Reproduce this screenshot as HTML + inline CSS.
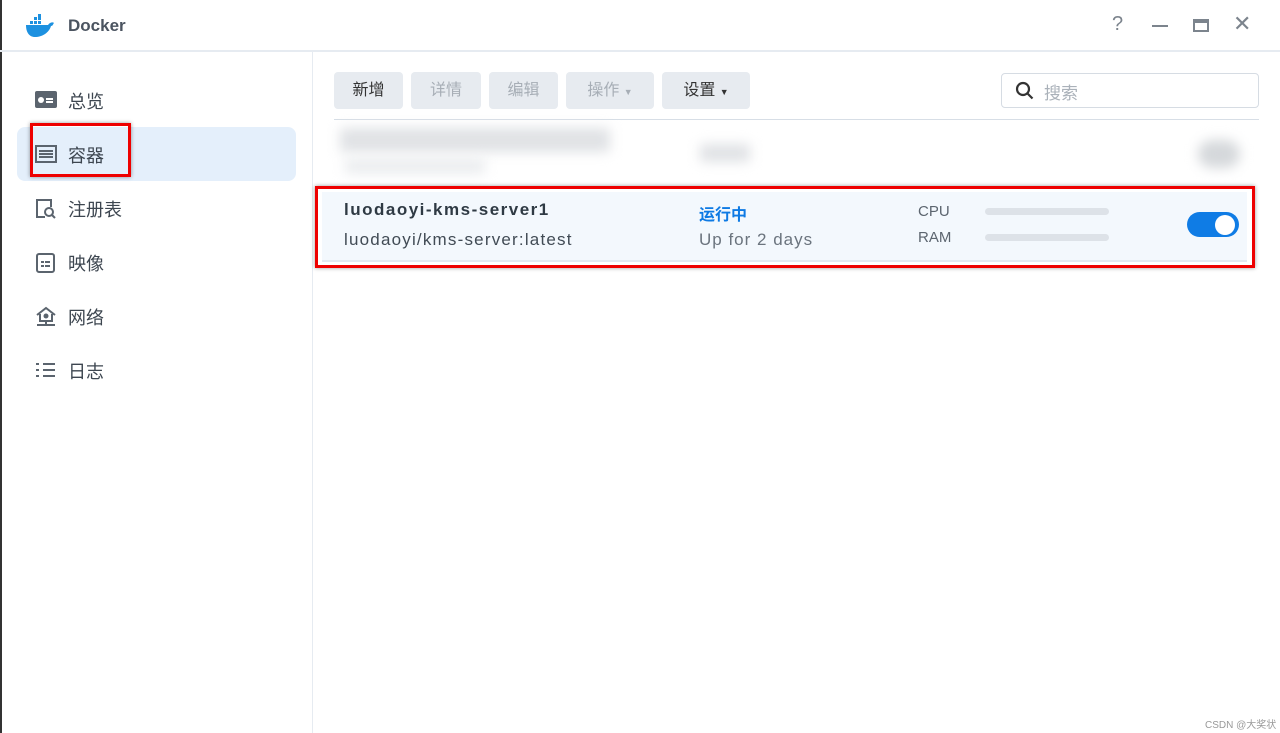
<!DOCTYPE html>
<html><head><meta charset="utf-8"><style>
*{margin:0;padding:0;box-sizing:border-box}
body{width:1280px;height:733px;overflow:hidden;background:#fff;font-family:"Liberation Sans","Noto Sans CJK SC",sans-serif;color:#414b55;position:relative}
.abs{position:absolute}
.title{left:68px;top:16px;font-size:17px;font-weight:bold;color:#4b5460}
.hdr{left:0;top:50px;width:1280px;height:2px;background:#e6ebf1}
.side{left:312px;top:52px;width:1px;height:681px;background:#e6ebf1}
.nav{left:17px;width:279px;height:54px;border-radius:8px}
.nav span{position:absolute;left:51px;top:15px;font-size:18px;color:#3d4650}
.nav svg{position:absolute;left:18px;top:17px}
.btn{top:72px;height:37px;border-radius:4px;background:#e7ebf0;font-size:16px;line-height:37px;text-align:center}
.red{border:3px solid #e00;box-shadow:0 0 4px rgba(0,0,0,.4)}
.bar{height:7px;border-radius:4px;background:#dde2e8;width:124px}
</style></head><body>
<div class="abs" style="left:0;top:0;width:2px;height:733px;background:#333"></div>
<svg class="abs" style="left:25px;top:14px" width="30" height="24" viewBox="0 0 30 24"><path d="M1 11h22c2-3 5-3 6-2-1 1-1 3-3 3-2 7-9 11-16 11C4 23 1 18 1 11z" fill="#1d91e0"/><rect x="5" y="7" width="3" height="3" fill="#1d91e0"/><rect x="9" y="7" width="3" height="3" fill="#1d91e0"/><rect x="13" y="7" width="3" height="3" fill="#1d91e0"/><rect x="9" y="3" width="3" height="3" fill="#1d91e0"/><rect x="13" y="3" width="3" height="3" fill="#1d91e0"/><rect x="13" y="0" width="3" height="3" fill="#1d91e0"/></svg>
<div class="abs title">Docker</div>
<div class="abs" style="left:1112px;top:13px;font-size:20px;color:#7c848d">?</div>
<div class="abs" style="left:1152px;top:25px;width:16px;height:2px;background:#7c848d"></div>
<div class="abs" style="left:1193px;top:19px;width:16px;height:13px;border:2px solid #7c848d;border-top-width:4px"></div>
<div class="abs" style="left:1233px;top:11px;font-size:22px;color:#7c848d">✕</div>
<div class="abs hdr"></div>
<div class="abs side"></div>

<div class="abs nav" style="top:73px"><svg width="22" height="20" viewBox="0 0 22 20"><rect x="0" y="1" width="22" height="17" rx="2" fill="#5b646e"/><circle cx="6" cy="10" r="3" fill="#fff"/><rect x="11" y="8" width="7" height="2" fill="#fff"/><rect x="11" y="11" width="7" height="2" fill="#fff"/></svg><span>总览</span></div>
<div class="abs nav" style="top:127px;background:#e4effb"><svg width="22" height="20" viewBox="0 0 22 20"><rect x="1" y="2" width="20" height="16" fill="none" stroke="#5b646e" stroke-width="2"/><rect x="4" y="6" width="14" height="2" fill="#5b646e"/><rect x="4" y="9" width="14" height="2" fill="#5b646e"/><rect x="4" y="12" width="14" height="2" fill="#5b646e"/></svg><span>容器</span></div>
<div class="abs red" style="left:30px;top:123px;width:101px;height:54px"></div>
<div class="abs nav" style="top:181px"><svg width="22" height="22" viewBox="0 0 22 22"><path d="M10 19H2V2h14v7" fill="none" stroke="#5b646e" stroke-width="2"/><circle cx="14" cy="14" r="4" fill="none" stroke="#5b646e" stroke-width="2"/><path d="M17 17l3 3" stroke="#5b646e" stroke-width="2"/></svg><span>注册表</span></div>
<div class="abs nav" style="top:235px"><svg width="22" height="22" viewBox="0 0 22 22"><rect x="2" y="2" width="17" height="18" rx="2" fill="none" stroke="#5b646e" stroke-width="2"/><rect x="6" y="9" width="3" height="2" fill="#5b646e"/><rect x="10" y="9" width="5" height="2" fill="#5b646e"/><rect x="6" y="13" width="3" height="2" fill="#5b646e"/><rect x="10" y="13" width="5" height="2" fill="#5b646e"/></svg><span>映像</span></div>
<div class="abs nav" style="top:289px"><svg width="22" height="22" viewBox="0 0 22 22"><path d="M2 9L11 2l9 7M5 8v7h12V8" fill="none" stroke="#5b646e" stroke-width="2"/><circle cx="11" cy="10" r="2.5" fill="#5b646e"/><path d="M11 15v3M2 19h18" stroke="#5b646e" stroke-width="2"/></svg><span>网络</span></div>
<div class="abs nav" style="top:343px"><svg width="22" height="20" viewBox="0 0 22 20"><path d="M1 4h3M8 4h12M1 10h3M8 10h12M1 16h3M8 16h12" stroke="#5b646e" stroke-width="2"/></svg><span>日志</span></div>

<div class="abs btn" style="left:334px;width:69px;color:#333">新增</div>
<div class="abs btn" style="left:411px;width:70px;color:#a7aeb6">详情</div>
<div class="abs btn" style="left:489px;width:69px;color:#a7aeb6">编辑</div>
<div class="abs btn" style="left:566px;width:88px;color:#a7aeb6">操作 <small style="font-size:9px">▼</small></div>
<div class="abs btn" style="left:662px;width:88px;color:#333">设置 <small style="font-size:9px">▼</small></div>
<div class="abs" style="left:1001px;top:73px;width:258px;height:35px;border:1px solid #d6dce3;border-radius:4px"></div>
<svg class="abs" style="left:1015px;top:81px" width="20" height="20" viewBox="0 0 20 20"><circle cx="8" cy="8" r="6" fill="none" stroke="#333" stroke-width="2.2"/><path d="M12.5 12.5l5 5" stroke="#333" stroke-width="2.2"/></svg>
<div class="abs" style="left:1044px;top:79px;font-size:17px;color:#aab1b9">搜索</div>
<div class="abs" style="left:334px;top:119px;width:925px;height:1px;background:#d7dee6"></div>

<div class="abs" style="left:340px;top:128px;width:270px;height:24px;background:#e0e2e5;filter:blur(6px)"></div>
<div class="abs" style="left:345px;top:158px;width:140px;height:16px;background:#ebedef;filter:blur(6px)"></div>
<div class="abs" style="left:700px;top:144px;width:50px;height:18px;background:#e0e2e5;filter:blur(6px)"></div>
<div class="abs" style="left:1198px;top:140px;width:42px;height:28px;background:#d5d8db;filter:blur(6px);border-radius:14px"></div>

<div class="abs" style="left:322px;top:192px;width:925px;height:70px;background:#f3f8fd;border-bottom:2px solid #e1e8f0"></div>
<div class="abs red" style="left:315px;top:186px;width:940px;height:82px"></div>
<div class="abs" style="left:344px;top:200px;font-size:17px;font-weight:bold;color:#2f3a44;letter-spacing:1.5px">luodaoyi-kms-server1</div>
<div class="abs" style="left:344px;top:230px;font-size:17px;color:#414b55;letter-spacing:1.2px">luodaoyi/kms-server:latest</div>
<div class="abs" style="left:699px;top:201px;font-size:16px;font-weight:bold;color:#0e7ae4">运行中</div>
<div class="abs" style="left:699px;top:230px;font-size:17px;color:#6b747e;letter-spacing:1px">Up for 2 days</div>
<div class="abs" style="left:918px;top:203px;font-size:15px;color:#5c656f">CPU</div>
<div class="abs" style="left:918px;top:229px;font-size:15px;color:#5c656f">RAM</div>
<div class="abs bar" style="left:985px;top:208px"></div>
<div class="abs bar" style="left:985px;top:234px"></div>
<div class="abs" style="left:1187px;top:212px;width:52px;height:25px;border-radius:13px;background:#0f7ce5"></div>
<div class="abs" style="left:1215px;top:215px;width:20px;height:20px;border-radius:10px;background:#fff"></div>
<div class="abs" style="left:1205px;top:716px;font-size:10px;color:#999">CSDN @大奖状</div>
</body></html>
